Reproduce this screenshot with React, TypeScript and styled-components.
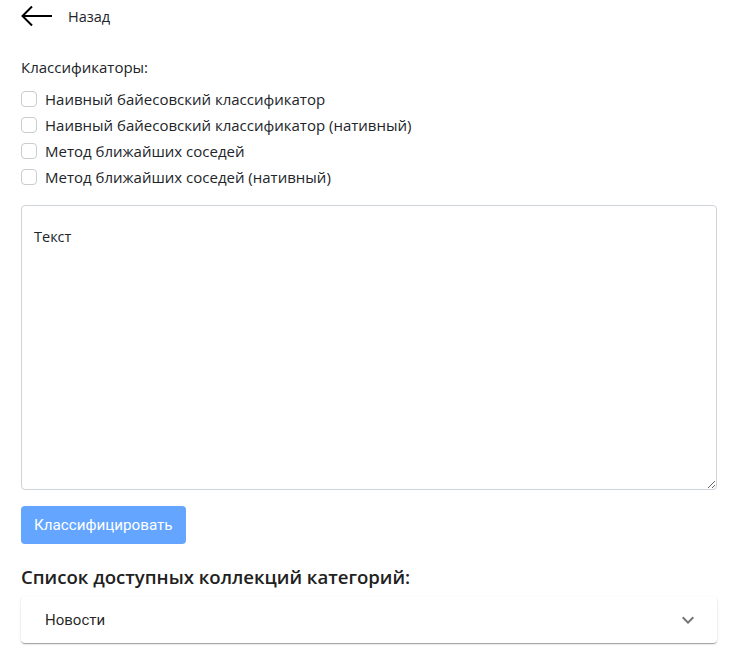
import React from "react";
import styled, { createGlobalStyle } from "styled-components";

const GlobalStyle = createGlobalStyle`
  html, body {
    margin: 0;
    padding: 0;
    background: #ffffff;
  }
  body {
    font-family: "Open Sans", "Noto Sans", sans-serif;
    color: #212529;
  }
`;

const Page = styled.div`
  width: 696px;
  padding: 0 0 12px 21px;
  display: flex;
  flex-direction: column;
`;

const BackLink = styled.a`
  display: flex;
  align-items: center;
  gap: 15px;
  height: 32px;
  color: #212529;
  font-size: 14.5px;
  text-decoration: none;
  cursor: pointer;
`;

const Label = styled.div`
  margin-top: 25px;
  font-size: 15px;
  line-height: 20px;
`;

const CheckList = styled.div`
  display: flex;
  flex-direction: column;
  margin-top: 9px;
`;

const CheckRow = styled.label`
  display: flex;
  align-items: center;
  gap: 8px;
  height: 26px;
  font-size: 15px;
  color: #212529;
`;

const Box = styled.input`
  appearance: none;
  margin: 0;
  width: 16px;
  height: 16px;
  border: 1px solid #c9ccd0;
  border-radius: 4px;
  background: #fff;
`;

const TextArea = styled.textarea`
  box-sizing: border-box;
  margin-top: 15px;
  width: 696px;
  height: 285px;
  padding: 21px 12px;
  border: 1px solid #ced4da;
  border-radius: 4px;
  font-family: "Open Sans", "Noto Sans", sans-serif;
  font-size: 14.5px;
  color: #212529;
  resize: both;
  outline: none;
`;

const Button = styled.button`
  align-self: flex-start;
  margin-top: 16px;
  height: 38px;
  padding: 0 13px;
  border: none;
  border-radius: 4px;
  background: #64a5ff;
  color: #ffffff;
  font-family: Roboto, sans-serif;
  font-size: 15.2px;
  cursor: pointer;
`;

const Heading = styled.h3`
  margin: 21px 0 0;
  font-size: 18.6px;
  line-height: 24px;
  font-weight: 600;
  color: #212121;
`;

const Accordion = styled.div`
  margin-top: 8px;
  height: 46px;
  display: flex;
  align-items: center;
  justify-content: space-between;
  padding: 0 17px 0 24px;
  border-radius: 4px;
  background: #fff;
  box-shadow: 0 2px 1px -1px rgba(0, 0, 0, 0.2), 0 1px 1px 0 rgba(0, 0, 0, 0.14),
    0 1px 3px 0 rgba(0, 0, 0, 0.12);
  font-family: Roboto, sans-serif;
  font-size: 15px;
  color: rgba(0, 0, 0, 0.87);
`;

const classifiers = [
  "Наивный байесовский классификатор",
  "Наивный байесовский классификатор (нативный)",
  "Метод ближайших соседей",
  "Метод ближайших соседей (нативный)",
];

const App: React.FC = () => {
  return (
    <>
      <GlobalStyle />
      <Page>
        <BackLink>
          <svg width="32" height="22" viewBox="0 0 32 22" fill="none">
            <path
              d="M31 11H2M11 1.5L1.5 11L11 20.5"
              stroke="#000"
              strokeWidth="2"
            />
          </svg>
          Назад
        </BackLink>
        <Label>Классификаторы:</Label>
        <CheckList>
          {classifiers.map((c) => (
            <CheckRow key={c}>
              <Box type="checkbox" />
              {c}
            </CheckRow>
          ))}
        </CheckList>
        <TextArea defaultValue="Текст" />
        <Button>Классифицировать</Button>
        <Heading>Список доступных коллекций категорий:</Heading>
        <Accordion>
          Новости
          <svg width="24" height="24" viewBox="0 0 24 24">
            <path
              d="M16.59 8.59 12 13.17 7.41 8.59 6 10l6 6 6-6z"
              fill="#757575"
            />
          </svg>
        </Accordion>
      </Page>
    </>
  );
};

export default App;
